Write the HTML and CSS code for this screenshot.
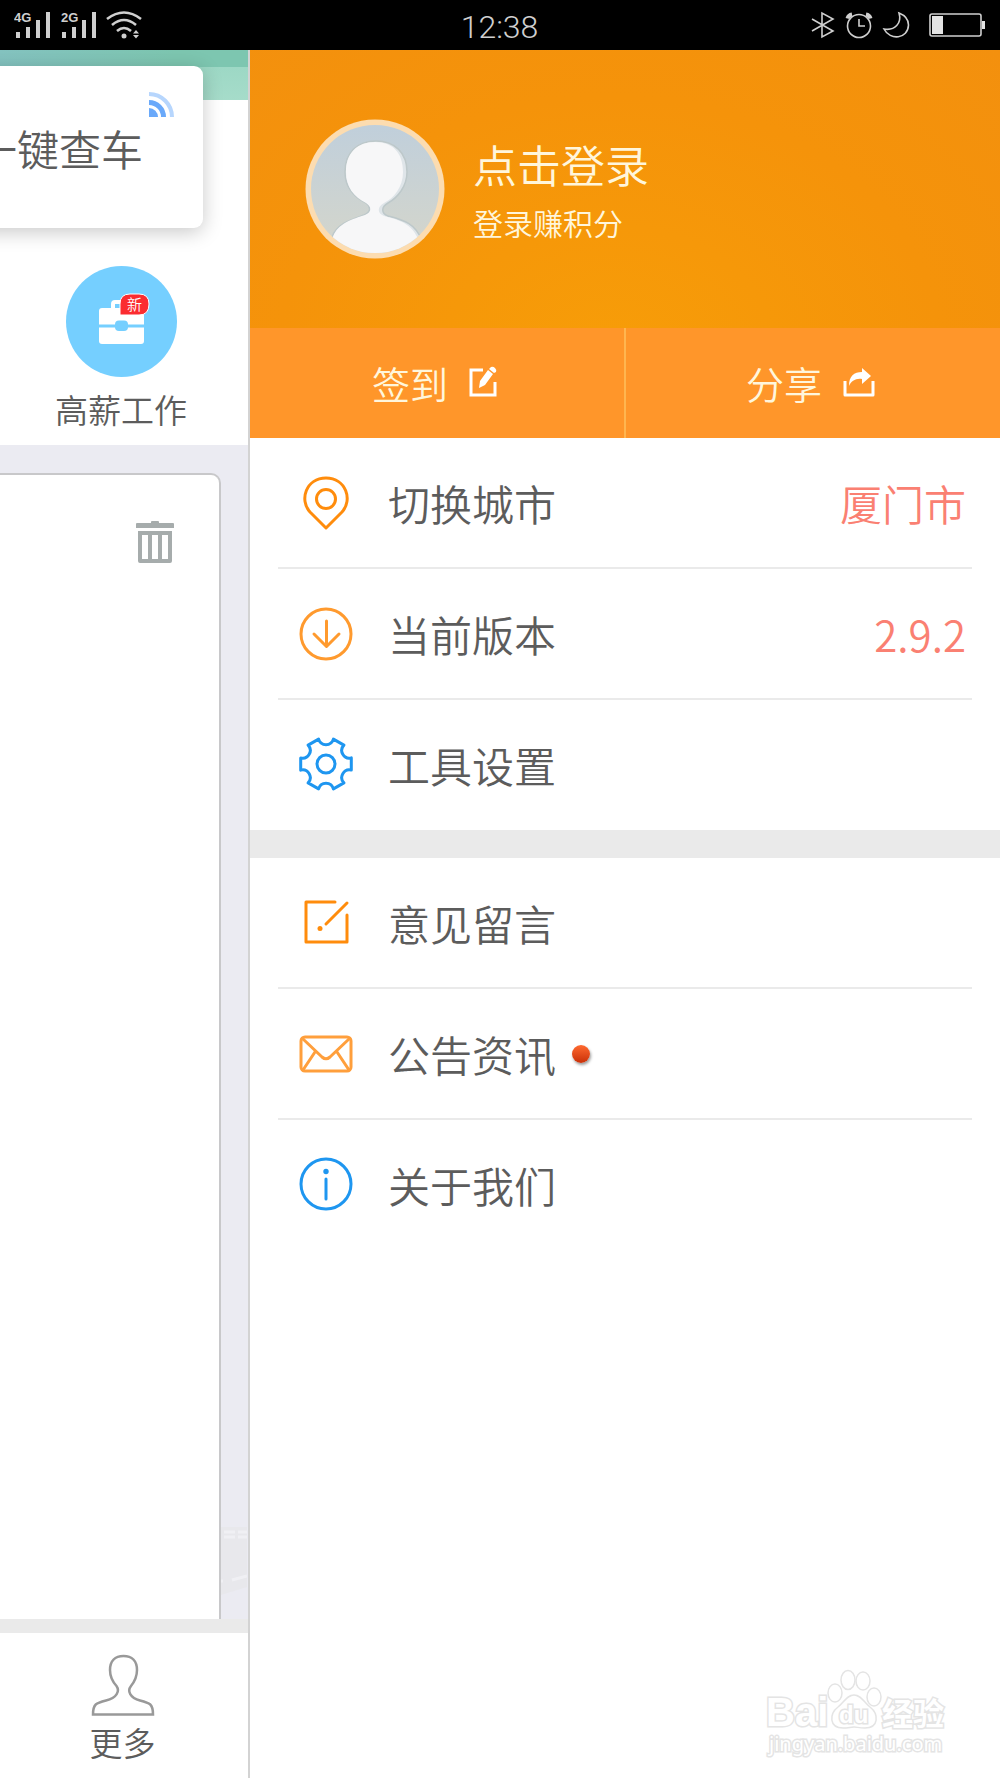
FILE: index.html
```html
<!DOCTYPE html>
<html lang="zh-CN">
<head>
<meta charset="utf-8">
<meta name="viewport" content="width=device-width, initial-scale=1">
<title>个人中心</title>
<link rel="stylesheet" href="styles.css">
</head>
<body>
<header class="status">
  <div class="status-side">
    <svg width="130" height="30" viewBox="0 0 130 30" fill="#cfcfcf">
      <text class="net" x="0" y="12">4G</text>
      <path d="M2 22h4v6H2zM12 17h4v11h-4zM22 10h4v18h-4zM32 2h4v26h-4z"/>
      <text class="net" x="47" y="12">2G</text>
      <path d="M48 22h4v6h-4zM58 17h4v11h-4zM68 10h4v18h-4zM78 2h4v26h-4z"/>
      <g fill="none" stroke="#cfcfcf" stroke-width="2.6"><path d="M93 9Q110-4 127 9"/><path d="M98 15Q110 5 122 15"/><path d="M103 21Q110 15 117 21"/></g>
      <circle cx="110" cy="26" r="2.5"/><path d="M119 23.500l3-3.500 3 3.500zM119 25l3 3.500 3-3.500z"/>
    </svg>
  </div>
  <time class="clock">12:38</time>
  <div class="status-side status-right">
    <svg width="174" height="30" viewBox="0 0 174 30" fill="none" stroke="#cfcfcf" stroke-width="1.6">
      <path d="M1 9l21 12-11 6V3l11 6L1 21"/>
      <circle cx="48" cy="16" r="11.500"/><path d="M48 9v7h6"/><path stroke-width="4" d="M36.500 8.500Q37.500 5 41 4.500M59.500 8.500Q58.500 5 55 4.500"/>
      <path d="M88 3C91 13 84 21 73 19 79 31 97 29 97.500 15 97.500 9 93 5 88 3z"/>
      <rect x="119" y="4" width="51" height="22" rx="2"/><path fill="#e4e4e4" stroke="none" d="M121 6h11v18h-11zM171 11h3v8h-3z"/>
    </svg>
  </div>
</header>
<div class="screen">
  <main class="home">
    <section class="hero">
      <a class="car-card" href="#"><svg class="rss" width="26" height="26" viewBox="0 0 26 26" fill="none" stroke-width="5"><path fill="#6aa9fa" d="M0 26v-9a9 9 0 0 1 9 9z"/><path stroke="#6aa9fa" d="M0 11.500A14.500 14.500 0 0 1 14.500 26"/><path stroke="#b7d6fd" stroke-width="4" d="M0 3A23 23 0 0 1 23 26"/></svg><span>一键查车</span></a>
      <a class="job" href="#">
        <svg width="111" height="111" viewBox="0 0 111 111"><circle cx="55.500" cy="55.500" r="55.500" fill="#75cfff"/><path fill="none" stroke="#fff" stroke-width="4" d="M47 44v-6q0-2 2-2h14q2 0 2 2v6"/><rect x="33" y="42" width="45" height="36" rx="3" fill="#fff"/><path stroke="#75cfff" stroke-width="3" d="M33 60h45"/><rect x="49" y="54.500" width="13" height="10.500" rx="4" fill="#75cfff"/><path fill="#fb2c30" stroke="#fff" stroke-width="1" d="M54 49V38q0-10 10-10h9q10 0 10 10 0 11-10 11z"/><text class="new" x="68.500" y="44">新</text></svg>
        <span>高薪工作</span>
      </a>
    </section>
    <section class="board">
      <div class="sheet">
        <button class="trash" aria-label="删除"><svg width="40" height="44" viewBox="0 0 40 44"><path fill="#a6acac" fill-rule="evenodd" d="M16 3V2q0-1 1-1h6q1 0 1 1v1h14q1 0 1 1v4H1V4q0-1 1-1zM3 11h34v30q0 2-2 2H5q-2 0-2-2zm4 4v24h6V15zm10 0v24h6V15zm10 0v24h6V15z"/></svg></button>
      </div>
      <svg class="road" width="26" height="90" viewBox="0 0 26 90" fill="none"><path fill="#e8e8ec" d="M0 10h26v60L0 78z"/><path stroke="#f0f0f4" stroke-width="3" d="M3 15h11M17 15h9M3 20h11M17 20h9M0 64h2M11 63l15-4"/></svg>
    </section>
    <nav class="tabs">
      <a class="tab" href="#"><svg width="64" height="62" viewBox="0 0 64 62" fill="none" stroke="#999" stroke-width="2.500"><path d="M2 60.500C2 50 5 49 15 46.500 26 44 29 37 25.500 32 21 27 19 23 19 16 19 7 24 2 32.500 2S46 7 46 16C46 23 44 27 40 32 36 37 39 44 49 46.500 59 49 62 50 62 60.500z"/></svg><span>更多</span></a>
    </nav>
  </main>
  <aside class="drawer">
    <a class="profile" href="#">
      <svg width="140" height="140" viewBox="0 0 140 140">
        <defs><linearGradient id="sky" x2="0" y2="1"><stop offset="0" stop-color="#c0cfdb"/><stop offset="1" stop-color="#d5d6cb"/></linearGradient><clipPath id="disc"><circle cx="70" cy="70" r="64"/></clipPath></defs>
        <circle cx="70" cy="70" r="69.500" fill="#fcdcb0"/><circle cx="70" cy="70" r="64" fill="url(#sky)"/>
        <g clip-path="url(#disc)"><path fill="#dfe5e9" stroke="#bdc8ca" stroke-width="1.500" d="M40 53C40 34 52 22 71 22S102 34 102 53C102 68 92 79 83 84 76 88 76 94 83 97 98 101 111 104 117 122L117 140H25L27 118C32 104 48 100 59 96 66 93 66 88 61 84 49 78 40 68 40 53z"/><path fill="#f7f7f8" d="M41 53C41 34 52 23 70 23S98 34 98 53C98 68 89 79 79 84 72 88 72 94 79 97 94 101 107 104 114 122L114 140H26L28 118C33 104 48 100 60 96 67 93 67 88 61 84 49 78 41 68 41 53z"/></g>
      </svg>
      <span class="who"><strong>点击登录</strong><small>登录赚积分</small></span>
    </a>
    <div class="actions">
      <button class="action"><span>签到</span><svg width="30" height="32" viewBox="0 0 30 32" fill="none" stroke="#fff" stroke-width="3"><path d="M15 4H3v25h24V16"/><path fill="#fff" stroke="none" d="M11 22l1-7 8-11 5 4-8 11zM21 3l2-2q2-1 4 1t1 4l-2 1z"/></svg></button>
      <button class="action"><span>分享</span><svg width="34" height="32" viewBox="0 0 34 32" fill="none" stroke="#fff" stroke-width="3" stroke-linejoin="round"><path d="M3 15v14h28V15"/><path fill="#fff" stroke="none" d="M7 20C7 10 12 6 20 6V2l9 8-9 8v-5C14 12 9 15 7 20z"/></svg></button>
    </div>
    <nav class="group">
      <a class="row" href="#"><svg class="icon" viewBox="0 0 56 56" stroke="#ff8c0c"><path d="M28 53L12 37C1 25 8 3 28 3S55 25 44 37z"/><circle cx="28" cy="24" r="9.500"/></svg><span>切换城市</span><em>厦门市</em></a>
      <a class="row" href="#"><svg class="icon" viewBox="0 0 56 56" stroke="#ff9a2e"><circle cx="28" cy="28" r="25"/><path d="M28.500 15v25M16 28l12.500 12.500L41 28"/></svg><span>当前版本</span><em>2.9.2</em></a>
      <a class="row" href="#"><svg class="icon" viewBox="0 0 56 56" stroke="#1e96f0"><path d="M53.300 34.100A7.700 7.700 0 0 0 45.900 46.900L35.400 52.900A7.700 7.700 0 0 0 20.600 52.900L10.100 46.900A7.700 7.700 0 0 0 2.700 34.100L2.700 21.900A7.700 7.700 0 0 0 10.100 9.100L20.600 3.100A7.700 7.700 0 0 0 35.400 3.100L45.900 9.100A7.700 7.700 0 0 0 53.300 21.900z"/><circle cx="28" cy="28" r="9"/></svg><span>工具设置</span></a>
    </nav>
    <nav class="group">
      <a class="row" href="#"><svg class="icon" viewBox="0 0 56 56" stroke="#ff8c0c"><path d="M37 7H8v40h41V20M49 8L28 29"/><circle cx="22" cy="33.500" r="2.500" fill="#ff8c0c" stroke="none"/></svg><span>意见留言</span></a>
      <a class="row" href="#"><svg class="icon" viewBox="0 0 56 56" stroke="#ff9f3c"><rect x="3" y="11" width="50" height="34" rx="4"/><path d="M5 13l19 18q4 3.500 8 0l19-18M17 26L5 44M39 26l12 18"/></svg><span>公告资讯</span><i class="dot"></i></a>
      <a class="row" href="#"><svg class="icon" viewBox="0 0 56 56" stroke="#1e96f0"><circle cx="28" cy="28" r="25"/><path d="M28 23v20"/><circle cx="28" cy="15.500" r="2.700" fill="#1e96f0" stroke="none"/></svg><span>关于我们</span></a>
    </nav>
    <footer class="mark">
      <svg width="200" height="100" viewBox="0 0 200 100" fill="#fff" stroke="#e4e4e4" stroke-width="1.500">
        <text class="mark-bai" x="6" y="66">Bai</text>
        <ellipse cx="75" cy="33" rx="7" ry="9"/><ellipse cx="88" cy="20" rx="7" ry="9.500"/><ellipse cx="103" cy="21" rx="7" ry="9"/><ellipse cx="114" cy="37" rx="7" ry="9"/>
        <path d="M94 35C101 35 104 42 110 47 119 54 119 68 105 68 99 68 97 67 94 67S88 68 83 68C69 68 69 54 78 47 84 42 87 35 94 35z"/>
        <text class="mark-du" x="79" y="63">du</text><text class="mark-cn" x="122" y="65">经验</text><text class="mark-url" x="9" y="91">jingyan.baidu.com</text>
      </svg>
    </footer>
  </aside>
</div>
</body>
</html>
```
FILE: styles.css
```css
* { box-sizing: border-box; }
body {
  margin: 0;
  min-height: 100vh;
  display: flex;
  flex-direction: column;
  background: #fff;
  color: #5c5c5c;
  font-family: "Noto Sans CJK SC", sans-serif;
  font-weight: 350;
  overflow-x: hidden;
}
a { color: inherit; text-decoration: none; }
button { border: 0; padding: 0; background: none; color: inherit; font: inherit; }
svg { display: block; flex: none; }

.status {
  display: flex;
  align-items: center;
  height: 50px;
  padding: 0 15px 0 14px;
  background: #000;
  color: #cfcfcf;
}
.status-side { flex: 1; display: flex; }
.status-right { justify-content: flex-end; }
.clock { font: 300 32px/50px Roboto, sans-serif; padding-top: 4px; }
.net { font: bold 13px "Liberation Sans", sans-serif; }

.screen { flex: 1; display: flex; }
.home {
  width: 25%;
  display: flex;
  flex-direction: column;
  border-right: 2px solid #d3d3d3;
  overflow: hidden;
}
.hero {
  height: 395px;
  padding-top: 16px;
  background: linear-gradient(100deg, #84c3c0, #7dc6b0 70%) 0 0 / 100% 17px no-repeat,
    linear-gradient(#98d6c2, #a6dcca) 0 0 / 100% 50px no-repeat, #fff;
}
.car-card {
  display: flex;
  flex-direction: column;
  align-items: flex-end;
  height: 162px;
  margin: 0 45px 0 -24px;
  padding: 25px 28px 0 0;
  border-radius: 9px;
  background: #fff;
  box-shadow: 0 4px 20px rgba(0, 0, 0, .22);
  font-size: 42px;
  line-height: 62px;
  white-space: nowrap;
}
.car-card span { margin-right: 32px; }
.job {
  display: flex;
  flex-direction: column;
  align-items: center;
  padding: 38px 6px 0 0;
  font-size: 33px;
  line-height: 64px;
}
.new { font-size: 15px; fill: #fff; text-anchor: middle; }
.board {
  flex: 1;
  display: flex;
  align-items: flex-end;
  padding-top: 28px;
  background: #ebebf2;
}
.sheet {
  flex: 1;
  align-self: stretch;
  display: flex;
  justify-content: flex-end;
  align-items: flex-start;
  padding: 45px 44px 0 0;
  border: solid #c8c8ca;
  border-width: 2px 2px 0 0;
  border-radius: 0 10px 0 0;
  background: #fff;
}
.road { margin: 0 1px 12px 0; }
.tabs { height: 159px; border-top: 14px solid #eaeaea; }
.tab {
  display: flex;
  flex-direction: column;
  align-items: center;
  padding: 21px 3px 0 0;
  font-size: 33px;
  line-height: 52px;
}

.drawer { flex: 1; display: flex; flex-direction: column; }
.profile {
  display: flex;
  align-items: center;
  gap: 28px;
  height: 278px;
  padding-left: 55px;
  background: radial-gradient(ellipse at 48% 110%, #f79d08, #f5930a 60%, #f3900e);
  color: #fff6dc;
}
.who { display: flex; flex-direction: column; padding-top: 4px; }
.who strong { font-size: 44px; line-height: 62px; font-weight: 350; }
.who small { font-size: 30px; line-height: 54px; }
.actions { display: flex; height: 110px; background: #ff962a; color: #fff6dc; }
.action {
  flex: 1;
  display: flex;
  justify-content: center;
  align-items: center;
  gap: 20px;
  padding: 0 4px 2px 0;
  font-size: 38px;
}
.action + .action { border-left: 2px solid #ffb54f; }

.group + .group { border-top: 28px solid #eaeaea; }
.row {
  display: flex;
  align-items: center;
  height: 131px;
  margin: 0 28px;
  padding: 0 6px 0 20px;
  border-bottom: 2px solid #eaeaea;
  font-size: 42px;
}
.row:last-child { height: 130px; border-bottom-color: transparent; }
.icon {
  width: 56px;
  height: 56px;
  margin-right: 34px;
  fill: none;
  stroke-width: 3;
  stroke-linecap: round;
  stroke-linejoin: round;
}
.row em { margin-left: auto; font-style: normal; color: #fa8072; }
.dot {
  width: 18px;
  height: 18px;
  margin-left: 16px;
  border-radius: 50%;
  background: linear-gradient(#ff6a30, #c93008);
  box-shadow: 1px 2px 3px rgba(0, 0, 0, .4);
}
.mark { margin: auto 40px 18px auto; }
.mark text { paint-order: stroke; stroke-width: 3; }
.mark-bai { font: 700 40px "Liberation Sans", sans-serif; }
.mark-du { font: 700 24px "Liberation Sans", sans-serif; }
.mark-cn { font: 700 31px "Noto Sans CJK SC", sans-serif; }
.mark-url { font: 400 20px "Noto Sans", sans-serif; }
```
